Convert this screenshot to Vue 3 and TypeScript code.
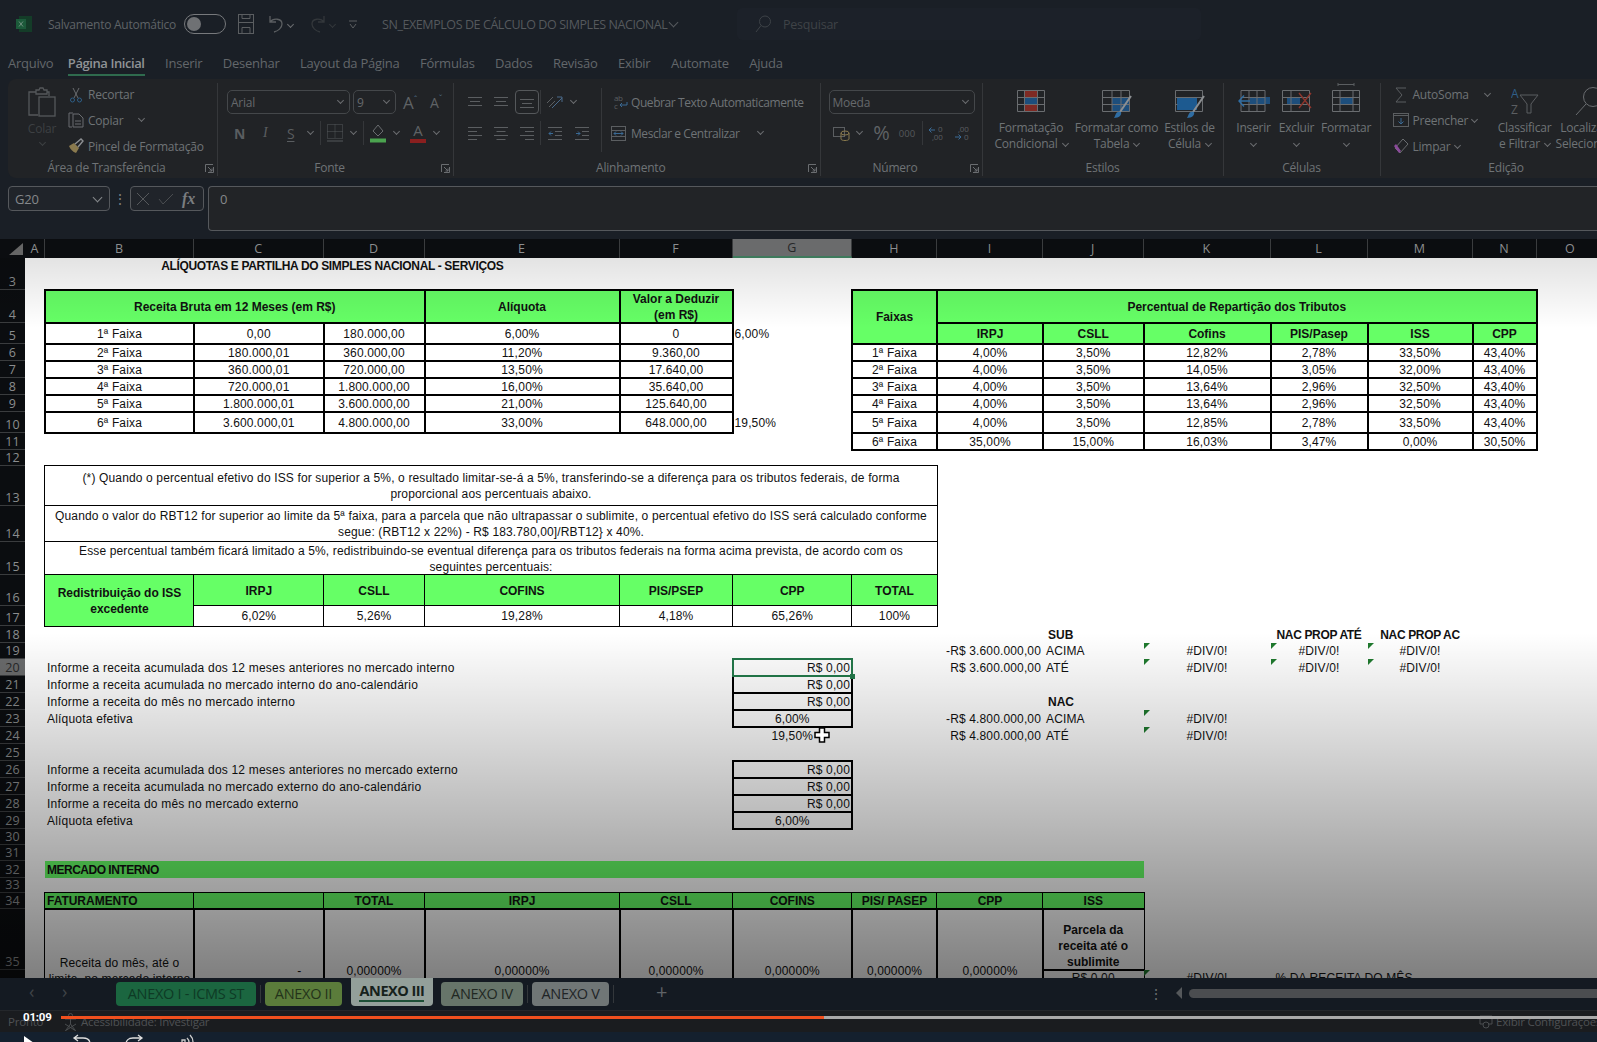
<script setup lang="ts">
interface Cell { col: number; row: number; cs: number; rs: number; text: string; cls: string }

const colNames = ['A', 'B', 'C', 'D', 'E', 'F', 'G', 'H', 'I', 'J', 'K', 'L', 'M', 'N', 'O']
const rowHeights: Record<number, number> = {
  3: 32, 4: 33, 5: 21, 6: 17, 7: 17, 8: 17, 9: 17, 10: 21, 11: 17, 12: 16, 13: 40, 14: 36, 15: 33, 16: 31, 17: 20,
  18: 17, 19: 16, 20: 17, 21: 17, 22: 17, 23: 17, 24: 17, 25: 17, 26: 17, 27: 17, 28: 17, 29: 17, 30: 16, 31: 16,
  32: 17, 33: 15, 34: 16, 35: 61, 36: 63,
}
const rowNums = Object.keys(rowHeights).map(Number)
const gridRows = '19px ' + rowNums.map((n) => rowHeights[n] + 'px').join(' ')
const rowIdx = (r: number) => r - 1
const colIdx = (c: string) => colNames.indexOf(c) + 2

const cells: Cell[] = []
const add = (c: string, row: number, text: string, cls = '', cs = 1, rs = 1) => {
  cells.push({ col: colIdx(c), row: rowIdx(row), cs, rs, text, cls })
}

add('B', 3, 'ALÍQUOTAS E PARTILHA DO SIMPLES NACIONAL - SERVIÇOS', 'bold caps top', 4)
add('B', 4, 'Receita Bruta em 12 Meses (em R$)', 'green bold thick', 3)
add('E', 4, 'Alíquota', 'green bold thick')
add('F', 4, 'Valor a Deduzir (em R$)', 'green bold thick wrap')
const faixas = [
  ['1ª Faixa', '0,00', '180.000,00', '6,00%', '0'],
  ['2ª Faixa', '180.000,01', '360.000,00', '11,20%', '9.360,00'],
  ['3ª Faixa', '360.000,01', '720.000,00', '13,50%', '17.640,00'],
  ['4ª Faixa', '720.000,01', '1.800.000,00', '16,00%', '35.640,00'],
  ['5ª Faixa', '1.800.000,01', '3.600.000,00', '21,00%', '125.640,00'],
  ['6ª Faixa', '3.600.000,01', '4.800.000,00', '33,00%', '648.000,00'],
]
faixas.forEach((f, i) => f.forEach((t, j) => add(colNames[j + 1], 5 + i, t, 'white thick')))
add('G', 5, '6,00%', 'left')
add('G', 10, '19,50%', 'left')

add('H', 4, 'Faixas', 'green bold thick', 1, 2)
add('I', 4, 'Percentual de Repartição dos Tributos', 'green bold thick', 6)
;['IRPJ', 'CSLL', 'Cofins', 'PIS/Pasep', 'ISS', 'CPP'].forEach((t, j) => add(colNames[8 + j], 5, t, 'green bold thick'))
const part = [
  ['1ª Faixa', '4,00%', '3,50%', '12,82%', '2,78%', '33,50%', '43,40%'],
  ['2ª Faixa', '4,00%', '3,50%', '14,05%', '3,05%', '32,00%', '43,40%'],
  ['3ª Faixa', '4,00%', '3,50%', '13,64%', '2,96%', '32,50%', '43,40%'],
  ['4ª Faixa', '4,00%', '3,50%', '13,64%', '2,96%', '32,50%', '43,40%'],
  ['5ª Faixa', '4,00%', '3,50%', '12,85%', '2,78%', '33,50%', '43,40%'],
  ['6ª Faixa', '35,00%', '15,00%', '16,03%', '3,47%', '0,00%', '30,50%'],
]
part.forEach((p, i) => p.forEach((t, j) => add(colNames[7 + j], 6 + i, t, 'white thick')))

add('B', 13, '(*) Quando o percentual efetivo do ISS for superior a 5%, o resultado limitar-se-á a 5%, transferindo-se a diferença para os tributos federais, de forma proporcional aos percentuais abaixo.', 'white thin wrap note', 7)
add('B', 14, 'Quando o valor do RBT12 for superior ao limite da 5ª faixa, para a parcela que não ultrapassar o sublimite, o percentual efetivo do ISS será calculado conforme segue: (RBT12 x 22%) - R$ 183.780,00]/RBT12} x 40%.', 'white thin wrap note', 7)
add('B', 15, 'Esse percentual também ficará limitado a 5%, redistribuindo-se eventual diferença para os tributos federais na forma acima prevista, de acordo com os seguintes percentuais:', 'white thin wrap note', 7)
add('B', 16, 'Redistribuição do ISS excedente', 'green bold thin wrap', 1, 2)
;['IRPJ', 'CSLL', 'COFINS', 'PIS/PSEP', 'CPP', 'TOTAL'].forEach((t, j) => add(colNames[2 + j], 16, t, 'green bold thin'))
;['6,02%', '5,26%', '19,28%', '4,18%', '65,26%', '100%'].forEach((t, j) => add(colNames[2 + j], 17, t, 'white thin'))

add('J', 18, 'SUB', 'bold left pad')
add('L', 18, 'NAC PROP ATÉ', 'bold caps nowrap')
add('M', 18, 'NAC PROP AC', 'bold caps nowrap')
add('I', 19, '-R$ 3.600.000,00', 'right')
add('J', 19, 'ACIMA', 'left pad3')
add('I', 20, 'R$ 3.600.000,00', 'right')
add('J', 20, 'ATÉ', 'left pad3')
add('J', 22, 'NAC', 'bold left pad')
add('I', 23, '-R$ 4.800.000,00', 'right')
add('J', 23, 'ACIMA', 'left pad3')
add('I', 24, 'R$ 4.800.000,00', 'right')
add('J', 24, 'ATÉ', 'left pad3')
const marks: [string, number][] = [['K', 19], ['K', 20], ['K', 23], ['K', 24], ['L', 19], ['L', 20], ['M', 19], ['M', 20]]
marks.forEach(([c, r]) => add(c, r, '#DIV/0!', 'mark'))

const labels: [number, string][] = [
  [20, 'Informe a receita acumulada dos 12 meses anteriores no mercado interno'],
  [21, 'Informe a receita acumulada no mercado interno do ano-calendário'],
  [22, 'Informe a receita do mês no mercado interno'],
  [23, 'Alíquota efetiva'],
  [26, 'Informe a receita acumulada dos 12 meses anteriores no mercado externo'],
  [27, 'Informe a receita acumulada no mercado externo do ano-calendário'],
  [28, 'Informe a receita do mês no mercado externo'],
  [29, 'Alíquota efetiva'],
]
labels.forEach(([r, t]) => add('B', r, t, 'left nowrap lbl'))
;[21, 22, 26, 27, 28].forEach((r) => add('G', r, 'R$ 0,00', 'thick right'))
add('G', 20, 'R$ 0,00', 'selected right')
add('G', 23, '6,00%', 'thick')
add('G', 24, '19,50%', '')
add('G', 29, '6,00%', 'thick')

add('B', 32, 'MERCADO INTERNO', 'green bar bold caps2 left', 9)
add('B', 34, 'FATURAMENTO', 'green bold thin left')
add('C', 34, '', 'green thin')
;['TOTAL', 'IRPJ', 'CSLL', 'COFINS', 'PIS/ PASEP', 'CPP', 'ISS'].forEach((t, j) => add(colNames[3 + j], 34, t, 'green bold thin'))
add('B', 35, 'Receita do mês, até o limite, no mercado interno', 'thin wrap', 1, 2)
add('C', 35, '-', 'thin dash', 1, 2)
;['D', 'E', 'F', 'G', 'H', 'I'].forEach((c) => add(c, 35, '0,00000%', 'thin', 1, 2))
add('J', 35, 'Parcela da receita até o sublimite', 'thin bold wrap bottom')
add('J', 36, 'R$ 0,00', 'thin top')
add('K', 36, '#DIV/0!', 'mark top')
add('L', 36, '% DA RECEITA DO MÊS', 'left nowrap top pad', 2)

const tabs = ['Arquivo', 'Página Inicial', 'Inserir', 'Desenhar', 'Layout da Página', 'Fórmulas', 'Dados', 'Revisão', 'Exibir', 'Automate', 'Ajuda']
</script>

<template>
  <div class="app">
    <header class="titlebar">
      <svg class="xl" width="16" height="16" viewBox="0 0 16 16"><rect x="3" y="0" width="13" height="16" fill="#143c28" /><rect x="0" y="3" width="10" height="10" fill="#1c5a3a" /><path d="M3 5.5 7 10.500M7 5.500 3 10.500" stroke="#6d8f7d" stroke-width="1" /></svg>
      <span class="autosave">Salvamento Automático</span>
      <span class="toggle"><i></i></span>
      <svg class="save" width="16" height="20" viewBox="0 0 16 20" fill="none" stroke="#5b5e61"><rect x=".5" y=".5" width="15" height="19" /><path d="M.5 8.500h15M4 19.500v-6h8v6M4 .5v4h8v-4" /></svg>
      <svg class="undo" width="14" height="18" viewBox="0 0 14 18" fill="none" stroke="#5b5e61" stroke-width="1.300"><path d="M1 1v6h6M1 7c3-4 12-4 12 2 0 4-4 7-8 8" /></svg>
      <span class="caret tc1"></span>
      <svg class="redo" width="14" height="18" viewBox="0 0 14 18" fill="none" stroke="#33373b" stroke-width="1.300"><path d="M13 1v6H7M13 7c-3-4-12-4-12 2 0 4 4 7 8 8" /></svg>
      <span class="caret tc2"></span>
      <svg class="custom" width="8" height="9" viewBox="0 0 8 9" fill="none" stroke="#5b5e61"><path d="M0 1h8M1 4l3 4 3-4" /></svg>
      <span class="doc">SN_EXEMPLOS DE CÁLCULO DO SIMPLES NACIONAL</span>
      <span class="caret tc3"></span>
      <div class="search">
        <svg width="16" height="18" viewBox="0 0 16 18" fill="none" stroke="#3d4247"><circle cx="10" cy="6.500" r="5.500" /><path d="M6 10.500 1 17" /></svg>
        <span>Pesquisar</span>
      </div>
    </header>

    <nav class="tabs">
      <span v-for="(t, i) in tabs" :key="t" class="tab" :class="{ active: i === 1 }">{{ t }}</span>
    </nav>

    <section class="ribbon">
      <div class="grp clip">
        <div class="content">
          <div class="paste">
            <svg width="28" height="30" viewBox="0 0 28 30" fill="none" stroke="#55585b" stroke-width="1.300"><path d="M8 5H1v23h9M8 5V3h3l1-2h3l1 2h3v4H8zM19 5h2v4" /><rect x="11" y="10" width="16" height="19" /></svg>
            <span class="dim">Colar</span>
            <span class="caret dimc"></span>
          </div>
          <div class="smalls">
            <div class="sm"><svg width="16" height="16" viewBox="0 0 16 16" fill="none" stroke="#6a6d70"><path d="M5 1l5 10M11 1 6 11" /><circle cx="4.500" cy="13" r="2" stroke="#2f5f88" /><circle cx="11.500" cy="13" r="2" stroke="#2f5f88" /></svg><span>Recortar</span></div>
            <div class="sm"><svg width="16" height="16" viewBox="0 0 16 16" fill="none" stroke="#6a6d70"><path d="M5 1H1v14h3" /><path d="M5 2h6l4 4v9H5zM7 9h6M7 12h6" /></svg><span>Copiar</span><span class="caret cpc"></span></div>
            <div class="sm"><svg width="16" height="16" viewBox="0 0 16 16" fill="none"><path d="M1 8l5-3 5 5-3 5C5 14 2 11 1 8z" fill="#8a7a4e" /><path d="M7 6l6-5 2 2-5 6" stroke="#8c8f92" stroke-width="1.400" /></svg><span>Pincel de Formatação</span></div>
          </div>
        </div>
        <div class="glabel"><span></span><b>Área de Transferência</b><svg class="launch" width="9" height="9" viewBox="0 0 9 9" fill="none" stroke="#6a6d70"><path d="M.5 8V.5H8M8.500 3v5.500H3M3 3l4 4M7 4.500V7H4.500" /></svg></div>
      </div>

      <div class="grp font">
        <div class="content col">
          <div class="line">
            <span class="select fname">Arial<span class="caret in"></span></span>
            <span class="select fsize">9<span class="caret in"></span></span>
            <span class="biga">A<sup>ˆ</sup></span>
            <span class="biga sm2">A<sup class="blue">ˇ</sup></span>
          </div>
          <div class="line fmt">
            <b class="n">N</b><i class="it">I</i><u class="s">S</u><span class="caret c1"></span>
            <span class="vsep"></span>
            <svg class="bord" width="16" height="18" viewBox="0 0 16 18" fill="none" stroke="#55585b" stroke-dasharray="1 1"><rect x=".5" y=".5" width="15" height="14" /><path d="M8 .5v14M.5 7.500h15" /><path d="M0 17h16" stroke-dasharray="none" /></svg>
            <span class="caret c2"></span>
            <span class="vsep"></span>
            <svg class="fill" width="16" height="20" viewBox="0 0 16 20" fill="none"><path d="M3 8l5-6 5 6-5 5z" stroke="#6a6d70" /><rect y="15.500" width="16" height="4" fill="#4ba34f" /></svg>
            <span class="caret c3"></span>
            <span class="fcolor"><em>A</em><i></i></span>
            <span class="caret c4"></span>
          </div>
        </div>
        <div class="glabel"><span></span><b>Fonte</b><svg class="launch" width="9" height="9" viewBox="0 0 9 9" fill="none" stroke="#6a6d70"><path d="M.5 8V.5H8M8.500 3v5.500H3M3 3l4 4M7 4.500V7H4.500" /></svg></div>
      </div>

      <div class="grp align">
        <div class="content al">
          <div class="algrid">
            <svg width="14" height="10" viewBox="0 0 14 10" stroke="#5b5e61"><path d="M0 .5h14M2 4.500h10M0 8.500h14" /></svg>
            <svg width="14" height="10" viewBox="0 0 14 10" stroke="#5b5e61"><path d="M0 .5h14M2 4.500h10M0 8.500h14" /></svg>
            <span class="selbox"><svg width="14" height="10" viewBox="0 0 14 10" stroke="#5b5e61"><path d="M0 .5h14M2 4.500h10M0 8.500h14" /></svg></span>
            <span class="vs"></span>
            <svg width="17" height="14" viewBox="0 0 17 14" fill="none" stroke="#5b5e61"><path d="M6 13 16 3M11 2h5v5" stroke="#4a6a8a" /><path d="M1 8l6-6M3 12l6-6" /></svg>
            <span class="caret orc"></span>
            <svg width="14" height="14" viewBox="0 0 14 14" stroke="#5b5e61"><path d="M0 1.500h14M0 5.500h9M0 9.500h14M0 13.500h9" /></svg>
            <svg width="14" height="14" viewBox="0 0 14 14" stroke="#5b5e61"><path d="M0 1.500h14M2.500 5.500h9M0 9.500h14M2.500 13.500h9" /></svg>
            <svg width="14" height="14" viewBox="0 0 14 14" stroke="#5b5e61"><path d="M0 1.500h14M5 5.500h9M0 9.500h14M5 13.500h9" /></svg>
            <span class="vs"></span>
            <svg width="14" height="14" viewBox="0 0 14 14" fill="none" stroke="#5b5e61"><path d="M0 1.500h14M7 5.500h7M7 9.500h7M0 13.500h14" /><path d="M5 7.500H1M3 5.500l-2 2 2 2" stroke="#3a6a95" /></svg>
            <svg width="14" height="14" viewBox="0 0 14 14" fill="none" stroke="#5b5e61"><path d="M0 1.500h14M7 5.500h7M7 9.500h7M0 13.500h14" /><path d="M1 7.500h4M3 5.500l2 2-2 2" stroke="#3a6a95" /></svg>
          </div>
          <div class="wrapcol">
            <div class="wl wl1">
              <svg width="15" height="16" viewBox="0 0 15 16"><text x="1" y="7" font-size="8" fill="#5b5e61" font-family="Open Sans, sans-serif">ab</text><text x="1" y="15" font-size="8" fill="#5b5e61" font-family="Open Sans, sans-serif">c</text><path d="M14 8v3H7M9 9l-2 2 2 2" stroke="#3a6a95" fill="none" /></svg>
              <span>Quebrar Texto Automaticamente</span>
            </div>
            <div class="wl wl2">
              <svg width="15" height="15" viewBox="0 0 15 15" fill="none" stroke="#5b5e61"><rect x=".5" y=".5" width="14" height="14" /><path d="M.5 4.500h14M.5 10.500h14" /><path d="M3 7.500h9M5 5.500l-2 2 2 2M10 5.500l2 2-2 2" stroke="#3a6a95" /></svg>
              <span>Mesclar e Centralizar</span>
              <span class="caret mc"></span>
            </div>
          </div>
        </div>
        <div class="glabel"><span></span><b>Alinhamento</b><svg class="launch" width="9" height="9" viewBox="0 0 9 9" fill="none" stroke="#6a6d70"><path d="M.5 8V.5H8M8.500 3v5.500H3M3 3l4 4M7 4.500V7H4.500" /></svg></div>
      </div>

      <div class="grp number">
        <div class="content col">
          <div class="line"><span class="select nfmt">Moeda<span class="caret in"></span></span></div>
          <div class="numgrid">
            <svg width="17" height="16" viewBox="0 0 17 16" fill="none"><rect x=".5" y="2.500" width="11" height="9" stroke="#5b5e61" /><ellipse cx="12" cy="8" rx="4" ry="2" stroke="#8a7a4e" /><path d="M8 8v6c0 2 8 2 8 0V8" stroke="#8a7a4e" /></svg>
            <span class="caret"></span>
            <span class="pct">%</span>
            <span class="k">000</span>
            <span class="vs"></span>
            <svg width="16" height="16" viewBox="0 0 16 16"><path d="M7 5H1M3.500 2.500 1 5l2.500 2.500" stroke="#3a6a95" fill="none" /><text x="10" y="7" font-size="8" fill="#5b5e61" font-family="Open Sans, sans-serif">0</text><text x="4" y="15" font-size="8" fill="#5b5e61" font-family="Open Sans, sans-serif">,00</text></svg>
            <svg width="16" height="16" viewBox="0 0 16 16"><text x="4" y="7" font-size="8" fill="#5b5e61" font-family="Open Sans, sans-serif">,00</text><text x="10" y="15" font-size="8" fill="#5b5e61" font-family="Open Sans, sans-serif">0</text><path d="M1 12h6M4.500 9.500 7 12l-2.500 2.500" stroke="#3a6a95" fill="none" /></svg>
          </div>
        </div>
        <div class="glabel"><span></span><b>Número</b><svg class="launch" width="9" height="9" viewBox="0 0 9 9" fill="none" stroke="#6a6d70"><path d="M.5 8V.5H8M8.500 3v5.500H3M3 3l4 4M7 4.500V7H4.500" /></svg></div>
      </div>

      <div class="grp styles">
        <div class="content bigs">
          <div class="big w81">
            <svg width="28" height="30" viewBox="0 0 28 30" fill="none"><rect x="7" y="0" width="14" height="7" fill="#7e2a24" /><rect x="7" y="7" width="14" height="7" fill="#1d4e7c" /><rect x="7" y="14" width="14" height="8" fill="#7e2a24" /><path d="M.5.5h27v21H.5zM.5 7.500h27M.5 14.500h27M7.500.5v21M20.500.5v21" stroke="#6a6d70" /></svg>
            <span>Formatação<br />Condicional<i class="caret inl"></i></span>
          </div>
          <div class="big w90">
            <svg width="30" height="30" viewBox="0 0 30 30" fill="none"><rect x="10" y="7" width="18" height="15" fill="#1d4e7c" /><path d="M.5.5h27v21H.5zM.5 7.500h27M.5 14.500h27M10 .5v21M19 .5v21" stroke="#6a6d70" /><path d="M29 6 18 22" stroke="#8c8f92" stroke-width="2" /><path d="M13 26c1-4 3-5 6-4 1 3-2 6-7 6z" fill="#2f6da3" /></svg>
            <span>Formatar como<br />Tabela<i class="caret inl"></i></span>
          </div>
          <div class="big w56">
            <svg width="30" height="30" viewBox="0 0 30 30" fill="none"><rect x="2" y="7" width="20" height="13" fill="#1d5a90" /><path d="M.5.5h27v21H.5zM.5 7.500h27M.5 14.500h2" stroke="#6a6d70" /><path d="M29 6 18 22" stroke="#8c8f92" stroke-width="2" /><path d="M13 26c1-4 3-5 6-4 1 3-2 6-7 6z" fill="#2f6da3" /></svg>
            <span>Estilos de<br />Célula<i class="caret inl"></i></span>
          </div>
        </div>
        <div class="glabel center"><b>Estilos</b></div>
      </div>

      <div class="grp cellsg">
        <div class="content bigs">
          <div class="big w44">
            <svg width="32" height="30" viewBox="0 0 32 30" fill="none"><rect x="12" y="7" width="20" height="7" fill="#1d4e7c" /><path d="M3 .5h24v21H3zM3 7.500h24M3 14.500h24M11 .5v21M19 .5v21" stroke="#6a6d70" /><path d="M12 11H1M6 5.500l-5 5.500 5 5.500" stroke="#2f6da3" stroke-width="1.400" /></svg>
            <span>Inserir<br /><i class="caret inl0"></i></span>
          </div>
          <div class="big w42">
            <svg width="30" height="30" viewBox="0 0 30 30" fill="none"><rect x="5" y="7" width="13" height="7" fill="#1d4e7c" /><path d="M.5.5h27v21H.5zM.5 7.500h27M.5 14.500h27M9 .5v21" stroke="#6a6d70" /><path d="M17 3l12 15M29 3 17 18" stroke="#8c352c" stroke-width="1.400" /></svg>
            <span>Excluir<br /><i class="caret inl0"></i></span>
          </div>
          <div class="big w57">
            <svg class="fmtc" width="28" height="30" viewBox="0 0 28 30" fill="none"><path d="M6 1.500h16M6 0v3M22 0v3" stroke="#5b5e61" /><rect x="8" y="14" width="13" height="7" fill="#1d4e7c" /><path d="M.5 7.500h27v21H.5zM.5 14.500h27M.5 21.500h27M8 7.500v21M21 7.500v21" stroke="#6a6d70" /></svg>
            <span>Formatar<br /><i class="caret inl0"></i></span>
          </div>
        </div>
        <div class="glabel center"><b>Células</b></div>
      </div>

      <div class="grp edit">
        <div class="content ed">
          <div class="smalls edl">
            <div class="sm"><svg width="16" height="16" viewBox="0 0 16 16" fill="none" stroke="#5b5e61"><path d="M13 1H3l6 7-6 7h10" /></svg><span>AutoSoma</span><span class="caret asc"></span></div>
            <div class="sm"><svg width="16" height="16" viewBox="0 0 16 16" fill="none" stroke="#5b5e61"><rect x=".5" y="1.500" width="15" height="13" /><path d="M.5 3.500h15" /><path d="M8 6v6M5.500 9.500 8 12l2.500-2.500" stroke="#3a6a95" /></svg><span>Preencher</span><i class="caret inl"></i></div>
            <div class="sm"><svg width="16" height="16" viewBox="0 0 16 16" fill="none"><path d="M10 1l5 5-8 9-5-5z" stroke="#6a6d70" /><path d="M1 8l5 7 2-2-5-7z" fill="#8a4a9a" /></svg><span>Limpar</span><i class="caret inl"></i></div>
          </div>
          <div class="big w56c">
            <svg width="28" height="30" viewBox="0 0 28 30"><text x="0" y="11" font-size="12" fill="#2f5f88" font-family="Open Sans, sans-serif">A</text><text x="0" y="27" font-size="12" fill="#5b5e61" font-family="Open Sans, sans-serif">Z</text><path d="M9 8h18l-7 9v9h-4v-9z" fill="none" stroke="#5b5e61" /></svg>
            <span>Classificar<br />e Filtrar<i class="caret inl"></i></span>
          </div>
          <div class="big w56c second">
            <svg width="28" height="30" viewBox="0 0 28 30" fill="none" stroke="#6a6d70"><circle cx="18" cy="10" r="9.500" /><path d="M11 17 1 28" /></svg>
            <span>Localizar e<br />Selecionar<i class="caret inl"></i></span>
          </div>
        </div>
        <div class="glabel center edlab"><b>Edição</b></div>
      </div>
    </section>

    <div class="formula">
      <div class="namebox">G20<span class="caret nb"></span></div>
      <span class="dots">⋮</span>
      <div class="fxbox">
        <svg width="14" height="14" viewBox="0 0 14 14" stroke="#55585b" fill="none"><path d="M1 1l12 12M13 1 1 13" /></svg>
        <svg width="16" height="12" viewBox="0 0 16 12" stroke="#4a4d50" fill="none"><path d="M1 6l4 5L15 1" /></svg>
        <em>fx</em>
      </div>
      <div class="finput">0</div>
    </div>

    <div class="sheet">
      <div class="grid" :style="{ gridTemplateRows: gridRows }">
        <div class="corner"><svg width="16" height="14" viewBox="0 0 16 14"><path d="M15 1v12H1z" fill="#666" /></svg></div>
        <div v-for="(c, i) in colNames" :key="c" class="colh" :class="{ on: c === 'G' }" :style="{ gridColumn: i + 2, gridRow: 1 }">{{ c }}</div>
        <div v-for="r in rowNums" :key="r" class="rowh" :class="{ on: r === 20 }" :style="{ gridColumn: 1, gridRow: rowIdx(r) }">{{ r }}</div>
        <div
          v-for="(c, i) in cells"
          :key="i"
          class="cell"
          :class="c.cls"
          :style="{ gridColumn: c.col + ' / span ' + c.cs, gridRow: c.row + ' / span ' + c.rs }"
        ><span>{{ c.text }}</span></div>
      </div>
      <div class="shade"></div>
      <svg class="pointer" width="16" height="16" viewBox="0 0 16 16"><path d="M5.500 1h5v4.500H15v5h-4.500V15h-5v-4.500H1v-5h4.500z" fill="#fff" stroke="#000" stroke-width="1.500" /></svg>
    </div>

    <div class="sheetbar">
      <span class="nav">‹</span><span class="nav n2">›</span>
      <span class="stab t1">ANEXO I - ICMS ST</span>
      <span class="sp"></span>
      <span class="stab t2">ANEXO II</span>
      <span class="stab t3">ANEXO III</span>
      <span class="stab t4">ANEXO IV</span>
      <span class="sp"></span>
      <span class="stab t5">ANEXO V</span>
      <span class="sp"></span>
      <span class="plus">+</span>
      <span class="vdots">⋮</span>
      <span class="larrow"></span>
      <span class="hscroll"></span>
    </div>

    <div class="status">
      <span class="ready">Pronto</span>
      <svg width="13" height="18" viewBox="0 0 13 18" fill="none" stroke="#4a4d50"><circle cx="6.500" cy="2.500" r="2" /><path d="M1 6h11M6.500 6v5M2 17l4.500-6 4.500 6M1 11l11 7M12 11 1 18" /></svg>
      <span class="acc">Acessibilidade: Investigar</span>
      <span class="cfg"><svg width="14" height="14" viewBox="0 0 14 14" fill="none" stroke="#4a4d50"><path d="M1 1h12v8H9M1 1v8h3" /><circle cx="7" cy="10" r="3" /></svg>Exibir Configurações</span>
      <span class="time">01:09</span>
      <div class="progress"><i></i></div>
    </div>

    <div class="video">
      <svg class="v1" width="10" height="14" viewBox="0 0 10 14"><path d="M0 0l10 7-10 7z" fill="#fff" /></svg>
      <svg class="v2" width="20" height="14" viewBox="0 0 20 14" fill="none" stroke="#ddd" stroke-width="1.300"><path d="M6 1 2 4l4 3M2 4h9c5 0 7 3 7 6" /></svg>
      <svg class="v3" width="20" height="14" viewBox="0 0 20 14" fill="none" stroke="#ddd" stroke-width="1.300"><path d="M14 1l4 3-4 3M18 4H9c-5 0-7 3-7 6" /></svg>
      <svg class="v4" width="14" height="14" viewBox="0 0 14 14" fill="none" stroke="#ccc" stroke-width="1.300"><path d="M9 1c2 2 3 4 3 7M6 4c1 1 2 2 2 4M1 6h3v8H1z" /></svg>
    </div>
  </div>
</template>

<style>
html, body { margin: 0; background: #14202e; overflow: hidden; }
</style>

<style scoped>
.app {
  width: 1597px;
  height: 1042px;
  overflow: hidden;
  display: flex;
  flex-direction: column;
  background: #1a1f26;
  font-family: "Open Sans", "Noto Sans", sans-serif;
  font-size: 12px;
  letter-spacing: -0.22px;
  color: #6f7376;
}
svg { display: block; flex: none; }

/* caret chevron */
.caret {
  display: inline-block;
  width: 4px;
  height: 4px;
  border-right: 1px solid #6a6d70;
  border-bottom: 1px solid #6a6d70;
  transform: rotate(45deg);
  flex: none;
}

/* title bar */
.titlebar { height: 48px; display: flex; align-items: center; padding-left: 16px; box-sizing: border-box; }
.autosave { margin-left: 16px; width: 128px; font-size: 12px; letter-spacing: -0.25px; color: #5f6366; white-space: nowrap; }
.toggle { margin-left: 8px; height: 18px; border: 1px solid #77797c; border-radius: 10px; display: flex; align-items: center; padding-left: 2px; box-sizing: content-box; width: 38px; }
.toggle i { width: 14px; height: 14px; border-radius: 50%; background: #6f7174; }
.save { margin-left: 12px; }
.undo { margin-left: 15px; }
.tc1 { margin-left: 5px; }
.redo { margin-left: 18px; }
.tc2 { margin-left: 5px; border-color: #33373b; }
.custom { margin-left: 14px; }
.doc { margin-left: 25px; width: 282px; color: #55595d; font-size: 12.500px; white-space: nowrap; letter-spacing: -0.42px; }
.tc3 { margin-left: 6px; width: 6px; height: 6px; margin-top: -3px; border-color: #55595d; }
.search { margin-left: 60px; width: 464px; height: 32px; box-sizing: border-box; background: #1c2129; border-radius: 5px; display: flex; align-items: center; padding-left: 18px; gap: 12px; font-size: 12.500px; color: #3f4347; }

/* ribbon tabs */
.tabs { height: 31px; display: flex; align-items: flex-start; gap: 20.500px; padding-left: 8px; box-sizing: border-box; }
.tab { font-size: 13px; line-height: 30px; letter-spacing: -0.25px; color: #63676b; height: 26px; white-space: nowrap; }
.tab.active { color: #8f9396; font-weight: 600; border-bottom: 2px solid #2f6b4e; letter-spacing: -0.42px; margin-left: -6px; }

/* ribbon */
.ribbon { margin-left: 8px; height: 99px; background: #212326; border-radius: 8px 0 0 8px; display: flex; padding-top: 4px; box-sizing: border-box; overflow: hidden; flex: none; }
.grp { height: 93px; flex: none; display: flex; flex-direction: column; box-sizing: border-box; border-right: 1px solid #35373a; }
.content { height: 77px; display: flex; }
.content.col { flex-direction: column; padding: 7px 0 0 8px; gap: 7px; box-sizing: border-box; }
.glabel { height: 16px; display: grid; grid-template-columns: 1fr auto 1fr; align-items: center; line-height: 16px; color: #6f7376; white-space: nowrap; padding-right: 12px; }
.glabel.center { display: flex; justify-content: center; padding-right: 0; }
.glabel b { font-weight: 400; }
.launch { justify-self: end; margin-right: -9px; }
.clip { width: 210px; }
.font { width: 236px; }
.align { width: 366.500px; }
.number { width: 162px; }
.styles { width: 241px; }
.cellsg { width: 157px; }
.edit { width: 260px; border-right: 0; }
.dim { color: #3d4043; line-height: 16px; margin-top: 4px; }
.dimc { border-color: #3d4043; margin-top: 3px; }
.paste { width: 34px; margin-left: 17px; display: flex; flex-direction: column; align-items: center; padding-top: 4px; }
.smalls { display: flex; flex-direction: column; margin-left: 9px; margin-top: -1px; }
.sm { height: 25.670px; display: flex; align-items: center; gap: 4px; white-space: nowrap; }
.cpc { margin-left: 12px; margin-top: -3px; }

.line { display: flex; align-items: center; height: 24px; }
.select { height: 24px; box-sizing: border-box; border: 1px solid #44474a; border-radius: 5px; display: flex; align-items: center; justify-content: space-between; padding: 0 6px 0 3px; color: #66696c; }
.select .in { margin-top: -3px; }
.fname { width: 123px; margin-left: 1px; }
.fsize { width: 43px; margin-left: 3px; }
.biga { font-size: 17px; margin-left: 7px; width: 20px; color: #5f6265; letter-spacing: 0; }
.biga sup { font-size: 9px; color: #4e6a85; vertical-align: 6px; line-height: 0; }
.sm2 { font-size: 14px; margin-left: 7px; }
.fmt { font-size: 14px; }
.n { margin-left: 8px; width: 10px; color: #5a5d60; }
.it { margin-left: 19px; width: 8px; font-family: "Liberation Serif", serif; color: #5a5d60; }
.s { margin-left: 16px; width: 9px; color: #5a5d60; text-underline-offset: 2px; }
.c1 { margin-left: 12px; margin-top: -3px; }
.vsep { width: 1px; height: 24px; background: #35373a; margin-left: 7px; }
.bord { margin-left: 6px; }
.c2 { margin-left: 8px; margin-top: -3px; }
.fill { margin-left: 6px; }
.c3 { margin-left: 8px; margin-top: -3px; }
.fcolor { margin-left: 11px; width: 16px; display: flex; flex-direction: column; align-items: center; height: 22px; }
.fcolor em { font-style: normal; font-size: 15px; line-height: 17px; color: #5f6265; letter-spacing: 0; }
.fcolor i { width: 16px; height: 4px; background: #8a1f1f; }
.c4 { margin-left: 8px; margin-top: -3px; }

.content.al { padding: 7px 0 0 8px; box-sizing: border-box; }
.algrid { display: grid; grid-template-columns: 26px 26px 26px 1px 27px 27px; grid-template-rows: 24px 24px; row-gap: 7px; align-items: center; justify-items: center; width: 133px; height: 55px; }
.algrid > .vs { height: 24px; width: 1px; background: #35373a; }
.selbox { width: 24px; height: 24px; box-sizing: border-box; border: 1px solid #55585b; border-radius: 4px; display: flex; align-items: center; justify-content: center; padding-top: 4px; }
.orc { margin-top: -3px; justify-self: start; margin-left: 3px; }
.wrapcol { margin-left: 6px; border-left: 1px solid #35373a; height: 64px; margin-top: -2px; display: flex; flex-direction: column; gap: 7px; padding-top: 2px; box-sizing: border-box; }
.wl { height: 24px; display: flex; align-items: center; gap: 3px; white-space: nowrap; letter-spacing: -0.42px; }
.wl1 { padding-left: 11px; }
.wl2 { padding-left: 9px; gap: 5px; }
.mc { margin-left: 13px; margin-top: -3px; }

.nfmt { width: 146px; }
.numgrid { display: grid; grid-template-columns: 25px 12px 32px 19px 11px 17px 35px; height: 24px; align-items: center; justify-items: center; }
.numgrid > .caret { margin-top: -3px; }
.numgrid > .vs { width: 1px; height: 24px; background: #35373a; }
.pct { font-size: 20px; line-height: 24px; color: #5f6265; letter-spacing: 0; }
.k { font-size: 9.500px; color: #55585b; letter-spacing: 0; }

.content.bigs { padding-left: 8px; box-sizing: border-box; }
.big { display: flex; flex-direction: column; align-items: center; flex: none; padding-top: 7px; box-sizing: border-box; }
.big > span { text-align: center; line-height: 16px; white-space: nowrap; }
.w81 { width: 81px; }
.w90 { width: 90px; }
.w56 { width: 56px; }
.w44 { width: 44px; }
.w42 { width: 42px; }
.w57 { width: 57px; }
.w56c { width: 56px; padding-top: 4px; }
.w56c > svg { margin-bottom: 3px; }
.second { margin-left: 8px; }
.fmtc { margin-top: -7px; margin-bottom: 7px; }
.inl { margin-left: 5px; position: relative; top: -2px; }
.inl0 { position: relative; top: -2px; }
.content.ed { padding-left: 12px; box-sizing: border-box; }
.edl { margin-left: 0; width: 104px; }
.asc { margin-left: 12px; margin-top: -3px; }
.edl .inl { margin-left: 0; top: -1px; }
.edlab { width: 251px; }

/* formula bar */
.formula { display: flex; align-items: flex-start; height: 61px; padding: 8px 0 0 8px; box-sizing: border-box; }
.namebox { width: 102px; height: 25px; box-sizing: border-box; border: 1px solid #55585c; border-radius: 4px; background: #20242a; display: flex; align-items: center; justify-content: space-between; padding: 0 8px 0 6px; color: #85888b; font-size: 13px; }
.nb { width: 6px; height: 6px; margin-top: -3px; border-color: #85888b; }
.dots { width: 20px; text-align: center; line-height: 25px; color: #7a7d80; font-size: 14px; }
.fxbox { width: 74px; height: 25px; box-sizing: border-box; border: 1px solid #55585c; border-radius: 4px; background: #20242a; display: flex; align-items: center; gap: 8px; padding-left: 5px; }
.fxbox em { font-family: "Liberation Serif", serif; font-size: 16px; font-weight: 700; color: #7a7d80; letter-spacing: 0; }
.finput { margin-left: 4px; flex: 1; height: 45px; box-sizing: border-box; border: 1px solid #55585c; border-right: 0; border-radius: 4px 0 0 4px; background: #222427; color: #85888b; padding: 3px 0 0 11px; font-size: 13px; }

/* sheet */
.sheet { position: relative; height: 739px; overflow: hidden; flex: none; background: #fff; }
.grid {
  display: grid;
  grid-template-columns: 25px 20px 149px 129.500px 101px 195px 113px 119.500px 85px 106px 100.500px 127px 97px 105px 64px 68px;
  width: 1604px;
  font-family: "Liberation Sans", Arial, sans-serif;
  font-size: 12px;
  letter-spacing: 0.14px;
  color: #111;
}
.corner { grid-column: 1; grid-row: 1; background: #0b0d10; padding: 3px 0 0 8px; box-sizing: border-box; }
.colh { background: #0b0d10; color: #8b8d8f; font-family: "Open Sans", sans-serif; font-size: 12.500px; display: flex; align-items: center; justify-content: center; border-right: 1px solid #3a3c3e; box-sizing: border-box; }
.colh.on { background: #6a6b6c; color: #262728; border-bottom: 2px solid #3e7a5c; }
.rowh { background: #0b0d10; color: #8b8d8f; font-family: "Open Sans", sans-serif; font-size: 12.500px; display: flex; align-items: flex-end; justify-content: center; border-bottom: 1px solid #3a3c3e; box-sizing: border-box; line-height: 15px; overflow: hidden; }
.rowh.on { background: #6a6b6c; color: #262728; }
.cell { display: flex; align-items: center; justify-content: center; text-align: center; min-width: 0; min-height: 0; white-space: nowrap; line-height: 16px; position: relative; padding: 0 2px; box-sizing: border-box; }
.cell.wrap { white-space: normal; }
.cell.note { padding: 0 8px; }
.cell.lbl { letter-spacing: 0.2px; }
.cell.white { background: #fff; }
.cell.green { background: #66ff66; }
.cell.bold { font-weight: 700; letter-spacing: -0.02px; }
.cell.caps { letter-spacing: -0.35px; }
.cell.caps2 { letter-spacing: -0.5px; }
.cell.thick { outline: 2px solid #000; outline-offset: -1px; }
.cell.thin { outline: 1px solid #000; outline-offset: 0; }
.cell.left { justify-content: flex-start; }
.cell.right { justify-content: flex-end; }
.cell.pad { padding-left: 5px; }
.cell.pad3 { padding-left: 3px; }
.cell.top { align-items: flex-start; }
.cell.bottom { align-items: flex-end; }
.cell.dash { justify-content: flex-end; padding-right: 22px; }
.cell.mark::before { content: ""; position: absolute; left: 0; top: 0; border-top: 6px solid #1f7a2e; border-right: 6px solid transparent; }
.cell.selected { outline: 2px solid #217346; outline-offset: -1px; z-index: 1; }
.cell.selected::after { content: ""; position: absolute; right: -3px; bottom: -3px; width: 5px; height: 5px; background: #217346; }
.shade {
  position: absolute;
  inset: 19px 0 0 0;
  pointer-events: none;
  background:
    linear-gradient(to bottom, rgba(0, 0, 0, 0.11), rgba(0, 0, 0, 0) 70px),
    linear-gradient(to bottom, rgba(0, 0, 0, 0) 375px, rgba(0, 0, 0, 0.5) 100%);
}
.pointer { position: absolute; left: 814px; top: 488px; }

/* sheet tabs */
.sheetbar { height: 32px; flex: none; background: #141a22; display: flex; align-items: flex-start; padding-left: 29px; box-sizing: border-box; position: relative; font-size: 14.500px; letter-spacing: -0.3px; }
.nav { color: #3f4347; width: 10px; line-height: 27px; font-size: 18px; }
.n2 { margin-left: 23px; }
.stab { margin-top: 4px; height: 24px; line-height: 24px; border-radius: 4px; text-align: center; color: #12251b; white-space: nowrap; box-sizing: border-box; }
.t1 { margin-left: 44px; width: 140px; background: #1b6640; color: #0e3a25; }
.sp { width: 1px; height: 18px; background: #33373b; margin: 7px 4px 0; flex: none; }
.t2 { width: 77px; background: #5b7c3b; color: #23331a; }
.t3 { margin-left: 9px; width: 82px; margin-top: 0; height: 28px; border-radius: 0 0 4px 4px; background: #939f9a; font-weight: 700; color: #16211c; position: relative; line-height: 25px; letter-spacing: -0.5px; }
.t3::after { content: ""; position: absolute; left: 8px; right: 9px; bottom: 4px; height: 2px; background: #1d4f36; }
.t4 { margin-left: 8px; width: 82px; background: #67756a; color: #1f2722; }
.t5 { width: 77px; background: #707676; color: #202426; }
.plus { margin-left: 38px; color: #5f6367; font-size: 20px; line-height: 28px; width: 12px; }
.vdots { position: absolute; left: 1149px; top: 7px; color: #6a6d70; font-size: 14px; line-height: 18px; }
.larrow { position: absolute; left: 1176px; top: 9px; border-right: 6px solid #55585b; border-top: 6px solid transparent; border-bottom: 6px solid transparent; }
.hscroll { position: absolute; left: 1189px; right: -20px; top: 11px; height: 9px; border-radius: 5px; background: #4b4d50; }

/* status */
.status { height: 22px; flex: none; background: #1a1c1f; display: flex; align-items: center; padding-left: 8px; box-sizing: border-box; position: relative; border-top: 1px solid #24272b; color: #4e5154; font-size: 11.500px; }
.ready { width: 56px; }
.acc { margin-left: 4px; }
.cfg { position: absolute; left: 1479px; top: 3px; display: flex; gap: 3px; align-items: center; white-space: nowrap; }
.time { position: absolute; left: 23px; top: -1px; color: #fff; font-family: "Roboto", sans-serif; font-weight: 700; font-size: 11.500px; letter-spacing: -0.2px; line-height: 14px; }
.progress { position: absolute; left: 61px; right: 0; top: 5px; height: 3px; background: #a9a9a9; }
.progress i { display: block; width: 763px; height: 3px; background: #f0501e; }

/* video */
.video { height: 10px; flex: none; background: #14202e; display: flex; align-items: flex-start; padding: 4px 0 0 24px; box-sizing: border-box; overflow: hidden; }
.v2 { margin-left: 38px; margin-top: -2px; }
.v3 { margin-left: 32px; margin-top: -2px; }
.v4 { margin-left: 37px; margin-top: -2px; }
</style>
